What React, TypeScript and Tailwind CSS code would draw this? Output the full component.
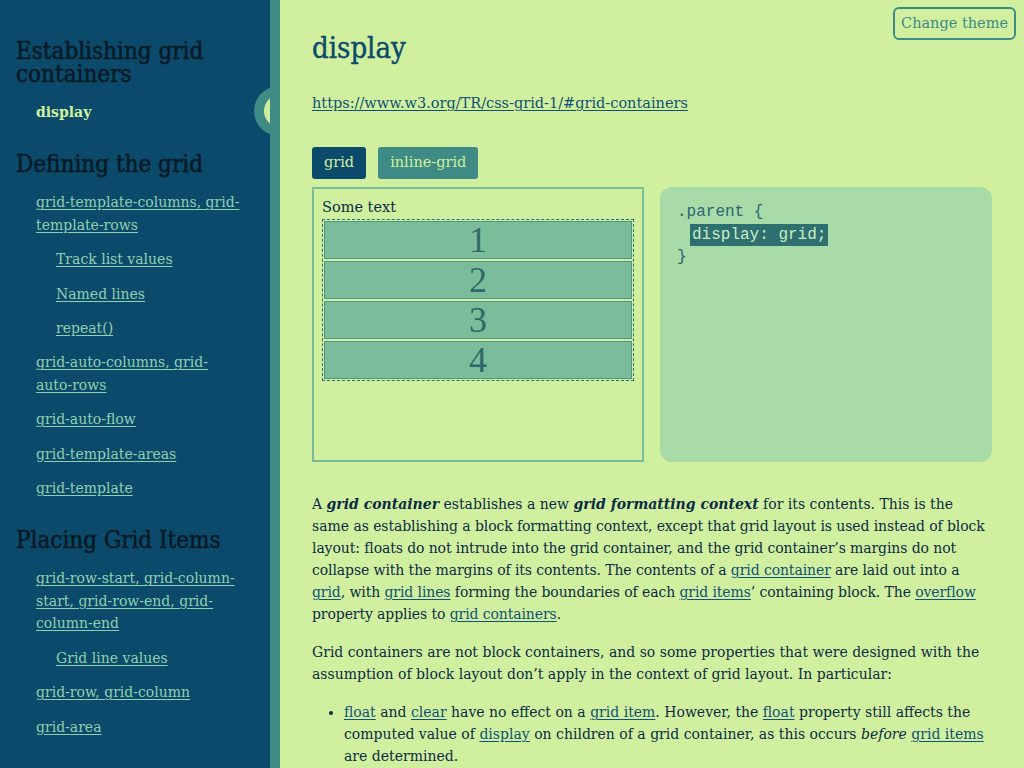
import React from "react";

const slab = "font-['DejaVu_Serif_Condensed','DejaVu_Serif',serif]";
const serif = "font-['DejaVu_Serif',serif]";

type NavItem = { label: string; sub?: boolean; active?: boolean };

const sections: { title: string; items: NavItem[] }[] = [
  {
    title: "Establishing grid containers",
    items: [{ label: "display", active: true }],
  },
  {
    title: "Defining the grid",
    items: [
      { label: "grid-template-columns, grid-template-rows" },
      { label: "Track list values", sub: true },
      { label: "Named lines", sub: true },
      { label: "repeat()", sub: true },
      { label: "grid-auto-columns, grid-auto-rows" },
      { label: "grid-auto-flow" },
      { label: "grid-template-areas" },
      { label: "grid-template" },
    ],
  },
  {
    title: "Placing Grid Items",
    items: [
      { label: "grid-row-start, grid-column-start, grid-row-end, grid-column-end" },
      { label: "Grid line values", sub: true },
      { label: "grid-row, grid-column" },
      { label: "grid-area" },
    ],
  },
];

function A({ children }: { children: React.ReactNode }) {
  return <a className="text-[#0f5275] underline underline-offset-2 decoration-1">{children}</a>;
}

export default function App() {
  return (
    <div className={`flex min-h-screen bg-[#d1f09f] ${serif} text-[14px] text-[#0b2c44]`}>
      <aside className="relative w-[280px] shrink-0 overflow-hidden border-r-[10px] border-[#3e8a85] bg-[#0b4a6b] pl-4 pr-[27px] pt-10">
        <div className="absolute left-[254px] top-[86px] h-[50px] w-[52px] rounded-full bg-[#3e8a85]" />
        <div className="absolute left-[264px] top-[95px] h-[32px] w-[32px] rounded-full bg-[#d1f09f]" />
        {sections.map((s, i) => (
          <div key={s.title} className={i > 0 ? "mt-[30px]" : ""}>
            <h2 className={`${slab} text-[24px] leading-[23px] text-[#051a26] [-webkit-text-stroke:0.5px_#051a26]`}>
              {s.title}
            </h2>
            <ul className="mt-[15px] flex flex-col gap-3 pl-5 text-[14px]">
              {s.items.map((it) => (
                <li key={it.label} className={`leading-[22.4px] ${it.sub ? "pl-5" : ""}`}>
                  {it.active ? (
                    <span className="font-bold text-[#d1f09f]">{it.label}</span>
                  ) : (
                    <a className="text-[#8fd0b0] underline underline-offset-2 decoration-1">{it.label}</a>
                  )}
                </li>
              ))}
            </ul>
          </div>
        ))}
      </aside>

      <main className="relative min-w-0 flex-1 px-8 pt-[31px] pb-10">
        <button className="absolute right-2 top-[7px] rounded-md border-2 border-[#3e8a85] px-[6px] py-[4px] text-[14.5px] leading-[21px] text-[#3e8a85]">
          Change theme
        </button>

        <h1 className={`${slab} text-[29px] leading-[34px] text-[#0b4a6b] [-webkit-text-stroke:0.4px_#0b4a6b]`}>display</h1>
        <p className="mt-[27px] text-[14.5px] leading-[22px]">
          <A>https://www.w3.org/TR/css-grid-1/#grid-containers</A>
        </p>

        <div className="mt-[33px] flex gap-3 text-[14.5px]">
          <button className="h-8 rounded-[3px] bg-[#0b4a6b] px-3 text-[#d1f09f]">grid</button>
          <button className="h-8 rounded-[3px] bg-[#3e8a85] px-3 text-[#d1f09f]">inline-grid</button>
        </div>

        <div className="mt-2 grid grid-cols-2 gap-4">
          <div className="h-[275px] border-2 border-[#7bbd9a] px-2 pt-[7px]">
            <div className="text-[14.5px] leading-[22px] text-[#0b2c44]">Some text</div>
            <div className="mt-[1px] flex flex-col gap-[2px] border border-dashed border-[#2e6e78] p-[1px]">
              {["1", "2", "3", "4"].map((n) => (
                <div
                  key={n}
                  className="flex h-[38px] items-center justify-center border border-[#4f9585] bg-[#7bbd9a] font-['Liberation_Serif',serif] text-[36px] leading-none text-[#2e6a6a]"
                >
                  {n}
                </div>
              ))}
            </div>
          </div>
          <div className="h-[275px] rounded-xl bg-[#a8dba8] pl-[17px] pt-[14px] font-['Liberation_Mono',monospace] text-[16px] leading-[22.5px] text-[#2d6577]">
            <div>.parent {"{"}</div>
            <div>
              <span className="ml-[13px] bg-[#2e7070] px-[2px] py-[2px] text-[#c9eec0]">display: grid;</span>
            </div>
            <div>{"}"}</div>
          </div>
        </div>

        <p className="mt-[31px] leading-[22px] tracking-[-0.1px]">
          <span className="tracking-normal">
            A <b><i>grid container</i></b> establishes a new <b><i>grid formatting context</i></b> for its contents. This
            is the same
          </span>{" "}
          as establishing a block formatting context, except that grid layout is used instead of block layout: floats do
          not intrude into the grid container, and the grid container’s margins do not collapse with the margins of its
          contents. The contents of a <A>grid container</A> are laid out into a <A>grid</A>, with <A>grid lines</A>{" "}
          forming the boundaries of each <A>grid items</A>’ containing block. The <A>overflow</A> property applies to{" "}
          <A>grid containers</A>.
        </p>

        <p className="mt-4 leading-[22px]">
          Grid containers are not block containers, and so some properties that were designed with the assumption of
          block layout don’t apply in the context of grid layout. In particular:
        </p>

        <ul className="mt-4 list-disc pl-8 leading-[22px]">
          <li>
            <A>float</A> and <A>clear</A> have no effect on a <A>grid item</A>. However, the <A>float</A> property still
            affects the computed value of <A>display</A> on children of a grid container, as this occurs{" "}
            <i>before</i> <A>grid items</A> are determined.
          </li>
          <li className="mt-2">
            <A>vertical-align</A> has no effect on a grid item.
          </li>
          <li className="mt-2">
            the <A>::first-line</A> and <A>::first-letter</A> pseudo-elements do not apply to grid containers.
          </li>
        </ul>
      </main>
    </div>
  );
}
